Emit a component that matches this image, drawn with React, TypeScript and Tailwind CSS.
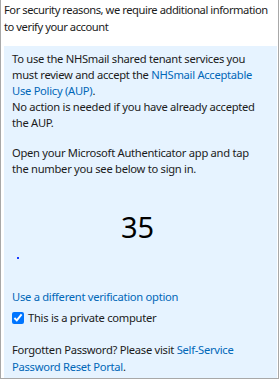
export default function App() {
  return (
    <div
      className="w-[279px] h-[379px] bg-white border-l border-r border-b border-[#a8a8a8] flex flex-col text-[#1b1b1b] text-[11.2px] tracking-[-0.28px] leading-[16px]"
      style={{ fontFamily: '"Noto Sans", "Segoe UI", sans-serif' }}
    >
      <p className="pl-[3px] pt-[1px] leading-[17px] tracking-[-0.45px]">
        For security reasons, we require additional information to verify your account
      </p>

      <div className="mt-[11px] ml-[3px] mr-[1px] flex-1 bg-[#e6f3ff] pl-[8px] pr-[14px] pt-[5px]">
        <p>
          To use the NHSmail shared tenant services you must review and accept the{" "}
          <a href="#" className="text-[#0067b8]">
            NHSmail Acceptable Use Policy (AUP)
          </a>
          .
          <br />
          No action is needed if you have already accepted the AUP.
        </p>

        <p className="mt-[14px]">
          Open your Microsoft Authenticator app and tap the number you see below to sign in.
        </p>

        <div className="mt-[34px] text-center text-[29px] tracking-normal leading-[32px] text-black">35</div>

        <div className="mt-[14px] ml-[5px] w-[2px] h-[2px] bg-[#1a3cff]" />

        <a href="#" className="mt-[30px] block text-[#0067b8]">
          Use a different verification option
        </a>

        <label className="mt-[5px] flex items-center gap-[4px]">
          <input type="checkbox" defaultChecked className="w-[12px] h-[12px] m-0 accent-[#0075ff]" />
          <span>This is a private computer</span>
        </label>

        <p className="mt-[15px] leading-[17px]">
          Forgotten Password? Please visit{" "}
          <a href="#" className="text-[#0067b8]">
            Self-Service Password Reset Portal
          </a>
          .
        </p>
      </div>
    </div>
  )
}
